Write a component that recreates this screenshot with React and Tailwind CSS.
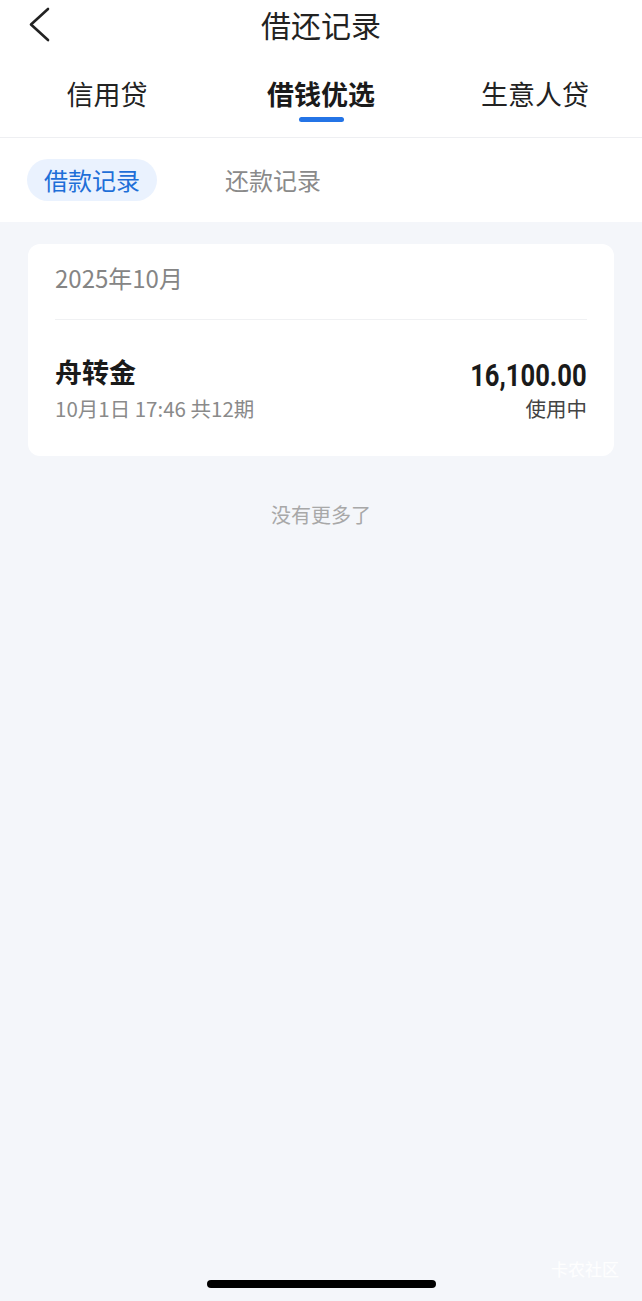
import React from "react";

const font = { fontFamily: '"Noto Sans CJK SC", "Noto Sans", sans-serif' };

export default function App() {
  return (
    <div className="w-[642px] h-[1301px] bg-[#f4f6fa] flex flex-col relative overflow-hidden" style={font}>
      {/* header */}
      <div className="bg-white">
        <div className="h-[50px] relative flex items-center justify-center">
          <svg className="absolute left-[26px] top-[7px]" width="28" height="36" viewBox="0 0 28 36">
            <path d="M22 2 L5 17.5 L22 33" fill="none" stroke="#222" strokeWidth="2.6" strokeLinecap="round" strokeLinejoin="round" />
          </svg>
          <span className="text-[30px] leading-none text-[#222] mt-[-3px]">借还记录</span>
        </div>
        <div className="h-[87px] flex items-start pt-[24px]">
          <div className="w-[214px] flex justify-center text-[27px] leading-[40px] text-[#222]">信用贷</div>
          <div className="w-[214px] flex flex-col items-center">
            <span className="text-[27px] leading-[40px] font-bold text-[#1a1a1a]">借钱优选</span>
            <div className="w-[45px] h-[5px] rounded-full bg-[#2474e6] mt-[3px]" />
          </div>
          <div className="w-[214px] flex justify-center text-[27px] leading-[40px] text-[#222]">生意人贷</div>
        </div>
        <div className="h-px bg-[#eeeff2]" />
        <div className="h-[84px] flex items-center px-[27px] gap-[30px]">
          <div className="h-[42px] w-[130px] rounded-full bg-[#eaf2fe] flex items-center justify-center text-[24px] text-[#1e6fd8] leading-none">借款记录</div>
          <div className="text-[24px] text-[#8a8a8a] leading-none ml-[38px]">还款记录</div>
        </div>
      </div>

      {/* card */}
      <div className="mx-[28px] mt-[22px] bg-white rounded-[12px] px-[27px]">
        <div className="h-[75px] flex items-center pb-[8px]">
          <span className="text-[24px] text-[#858585] leading-none">2025年10月</span>
        </div>
        <div className="h-px bg-[#f0f1f3]" />
        <div className="h-[136px] flex justify-between items-start pt-[34px]">
          <div className="flex flex-col">
            <span className="text-[27px] font-bold text-[#1a1a1a] leading-[36px]">舟转金</span>
            <span className="text-[20.5px] text-[#8a8a8a] leading-[30px] mt-[3px]">10月1日 17:46 共12期</span>
          </div>
          <div className="flex flex-col items-end mt-[4px]">
            <span
              className="text-[32px] font-bold text-[#1a1a1a] leading-[34px] scale-x-[0.8] origin-right"
              style={{ fontFamily: 'Roboto, "Noto Sans", sans-serif' }}
            >
              16,100.00
            </span>
            <span className="text-[20.5px] text-[#444] leading-[30px] mt-[1px]">使用中</span>
          </div>
        </div>
      </div>

      <div className="mt-[49px] flex justify-center text-[20px] text-[#a8a8a8] leading-none">没有更多了</div>

      {/* home indicator */}
      <div className="absolute left-[207px] top-[1280px] w-[229px] h-[8px] rounded-full bg-black" />
      <div className="absolute left-[551px] top-[1260px] text-[17px] text-white/90 leading-none">卡农社区</div>
    </div>
  );
}
